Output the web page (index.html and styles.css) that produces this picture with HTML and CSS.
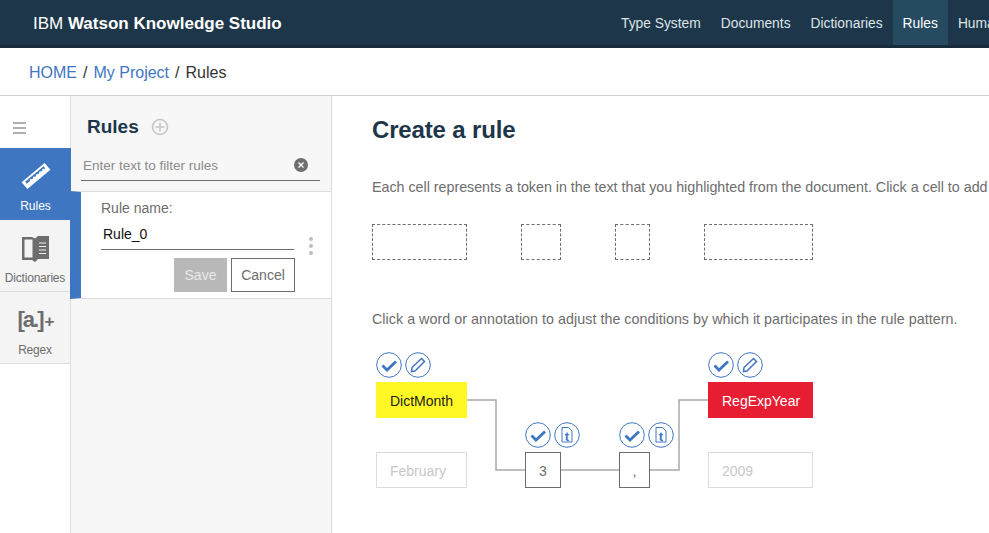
FILE: index.html
```html
<!DOCTYPE html>
<html lang="en">
<head>
    <meta charset="UTF-8">
    <title>IBM Watson Knowledge Studio</title>
    <link rel="stylesheet" href="styles.css">
</head>
<body>
    <header class="topbar">
        <div class="brand">IBM <b>Watson Knowledge Studio</b></div>
        <nav class="topnav">
            <a>Type System</a>
            <a>Documents</a>
            <a>Dictionaries</a>
            <a class="current">Rules</a>
            <a>Human</a>
        </nav>
    </header>
    <div class="crumbs">
        <a>HOME</a><span class="sep">/</span><a>My Project</a><span class="sep">/</span><span class="here">Rules</span>
    </div>
    <div class="workspace">
        <aside class="rail">
            <div class="burger"><i></i><i></i><i></i></div>
            <div class="rail-item active">
                <svg class="rail-icon icon-ruler" width="32" height="32" viewBox="0 0 32 32">
                    <g transform="rotate(-40 16 16)">
                        <rect x="1" y="11.500" width="30" height="9" fill="#fff"/>
                        <path d="M4 13.500h24v2.500h-1.500v-1h-2v1h-2v-1h-2v1h-2v-1h-2v1h-2v-1h-2v1h-2v-1h-2v1H4z" fill="#3f76c1"/>
                    </g>
                </svg>
                <span>Rules</span>
            </div>
            <div class="rail-item">
                <svg class="rail-icon icon-book" width="27" height="26" viewBox="0 0 27 26">
                    <path d="M0 1h10l3 1.500V26l-3-2H0zM2.500 3.500v18h8v-18z" fill="#6d6d6d"/>
                    <path d="M13 2.500 16 0h11v23H16l-3 3z" fill="#6d6d6d"/>
                    <path d="M17 7h7M17 10.500h7M17 14h7M17 17.500h7" stroke="#eee" stroke-width="1" fill="none"/>
                </svg>
                <span>Dictionaries</span>
            </div>
            <div class="rail-item">
                <div class="regex-mark">[a.]<em>+</em></div>
                <span>Regex</span>
            </div>
        </aside>
        <section class="rules-panel">
            <div class="panel-title">
                <h2>Rules</h2>
                <svg width="18" height="18" viewBox="0 0 18 18">
                    <circle cx="9" cy="9" r="7.500" fill="none" stroke="#c4c4c4" stroke-width="1.500"/>
                    <path d="M9 4.500v9M4.500 9h9" stroke="#c4c4c4" stroke-width="1.500"/>
                </svg>
            </div>
            <div class="filter">
                <span>Enter text to filter rules</span>
                <svg width="14" height="14" viewBox="0 0 14 14">
                    <circle cx="7" cy="7" r="7" fill="#6f6f6f"/>
                    <path d="M4.500 4.500l5 5M9.500 4.500l-5 5" stroke="#fff" stroke-width="1.400"/>
                </svg>
            </div>
            <div class="rule-card">
                <div class="rule-form">
                    <label>Rule name:</label>
                    <div class="rule-input">Rule_0</div>
                    <div class="rule-actions">
                        <button class="btn-save">Save</button>
                        <button class="btn-cancel">Cancel</button>
                    </div>
                </div>
                <div class="kebab"><i></i><i></i><i></i></div>
            </div>
        </section>
        <main class="content">
            <h1>Create a rule</h1>
            <p class="hint first">Each cell represents a token in the text that you highlighted from the document. Click a cell to add</p>
            <div class="cells">
                <div class="cell w95"></div>
                <div class="cell w40"></div>
                <div class="cell w35"></div>
                <div class="cell w109"></div>
            </div>
            <p class="hint second">Click a word or annotation to adjust the conditions by which it participates in the rule pattern.</p>
            <div class="pattern">
                <svg class="wires" width="450" height="150" viewBox="0 0 450 150">
                    <path d="M91 48h29v70h29M185 118h58M274 118h29V48h29" fill="none" stroke="#a9a9a9" stroke-width="1.500"/>
                </svg>
                <div class="token tok-month">
                    <div class="tools">
                        <svg class="tool" viewBox="0 0 26 26"><use href="#i-check"/></svg>
                        <svg class="tool" viewBox="0 0 26 26"><use href="#i-pencil"/></svg>
                    </div>
                    <div class="annot yellow">DictMonth</div>
                    <div class="word ghost">February</div>
                </div>
                <div class="token tok-three">
                    <div class="tools">
                        <svg class="tool" viewBox="0 0 26 26"><use href="#i-check"/></svg>
                        <svg class="tool" viewBox="0 0 26 26"><use href="#i-doc"/></svg>
                    </div>
                    <div class="word solid">3</div>
                </div>
                <div class="token tok-comma">
                    <div class="tools">
                        <svg class="tool" viewBox="0 0 26 26"><use href="#i-check"/></svg>
                        <svg class="tool" viewBox="0 0 26 26"><use href="#i-doc"/></svg>
                    </div>
                    <div class="word solid">,</div>
                </div>
                <div class="token tok-year">
                    <div class="tools">
                        <svg class="tool" viewBox="0 0 26 26"><use href="#i-check"/></svg>
                        <svg class="tool" viewBox="0 0 26 26"><use href="#i-pencil"/></svg>
                    </div>
                    <div class="annot red">RegExpYear</div>
                    <div class="word ghost">2009</div>
                </div>
            </div>
        </main>
    </div>

    <!-- shared icons -->
    <svg width="0" height="0" class="defs">
        <defs>
            <g id="i-check">
                <circle cx="13" cy="13" r="12.300" fill="#fff" stroke="#3f76c1" stroke-width="1"/>
                <path d="M6.500 13.500l4.500 4.500 9-8.500" fill="none" stroke="#3f76c1" stroke-width="2.800"/>
            </g>
            <g id="i-pencil">
                <circle cx="13" cy="13" r="12.300" fill="#fff" stroke="#3f76c1" stroke-width="1"/>
                <path d="M7 15.500 16.500 6.500l3 3L10 19l-3.500.5z" fill="none" stroke="#3f76c1" stroke-width="1.500"/>
            </g>
            <g id="i-doc">
                <circle cx="13" cy="13" r="12.300" fill="#fff" stroke="#3f76c1" stroke-width="1"/>
                <path d="M8 5.500h6.500L18 9v11H8z" fill="none" stroke="#3f76c1" stroke-width="1"/>
                <text x="13" y="18.500" class="doc-t">t</text>
            </g>
        </defs>
    </svg>
</body>
</html>
```

FILE: styles.css
```css
* {
    box-sizing: border-box;
}
html, body {
    height: 100%;
}
body {
    margin: 0;
    width: 989px;
    height: 533px;
    overflow: hidden;
    display: flex;
    flex-direction: column;
    font-family: "Liberation Sans", Arial, sans-serif;
    background-color: #fff;
    color: #6d6d6d;
}

/* top bar */
.topbar {
    height: 48px;
    flex: none;
    display: flex;
    justify-content: space-between;
    background-color: #1d3649;
    border-bottom: 3px solid #172c3b;
    color: #fff;
}
.brand {
    padding-left: 33px;
    font-size: 17px;
    line-height: 47px;
    font-weight: 400;
    white-space: nowrap;
}
.brand b {
    font-weight: 700;
}
.topnav {
    display: flex;
    width: 378px;
    flex: none;
    overflow: hidden;
    font-size: 13.800px;
    line-height: 47px;
    white-space: nowrap;
}
.topnav a {
    padding: 0 10px;
    color: #dfe4e8;
}
.topnav a.current {
    background-color: #264a60;
    color: #fff;
}

/* breadcrumb */
.crumbs {
    height: 48px;
    flex: none;
    padding-left: 29px;
    font-size: 16px;
    line-height: 49px;
    border-bottom: 1px solid #cfcfcf;
    color: #3f76c1;
}
.sep {
    margin: 0 6px;
    color: #333;
}
.here {
    color: #333;
}

.workspace {
    flex: 1;
    display: flex;
    min-height: 0;
}

/* left rail */
.rail {
    width: 71px;
    flex: none;
    border-right: 1px solid #dcdcdc;
}
.burger {
    height: 52px;
    padding: 26px 0 0 13px;
}
.burger i {
    display: block;
    width: 13px;
    height: 2px;
    margin-bottom: 3px;
    background-color: #b0b0b0;
}
.rail-item {
    height: 72px;
    display: flex;
    flex-direction: column;
    align-items: center;
    background-color: #f4f4f4;
    border-bottom: 1px solid #dcdcdc;
    font-size: 12px;
    color: #6d6d6d;
}
.rail-item.active {
    background-color: #3f76c1;
    color: #fff;
    border-bottom: 0;
    width: 71px;
}
.rail-item span {
    margin-top: auto;
    padding-bottom: 6px;
    letter-spacing: -0.2px;
}
.rail-item.active span {
    padding-bottom: 7px;
    letter-spacing: 0;
}
.rail-icon {
    flex: none;
}
.icon-ruler {
    margin-top: 12px;
}
.icon-book {
    margin-top: 16px;
}
.regex-mark {
    margin-top: 14px;
    font-size: 22px;
    line-height: 28px;
    font-weight: 700;
    letter-spacing: -2px;
    color: #6d6d6d;
}
.regex-mark em {
    font-style: normal;
    font-size: 17px;
    margin-left: 2px;
}

/* rules panel */
.rules-panel {
    width: 261px;
    flex: none;
    background-color: #f7f7f7;
    border-right: 1px solid #dcdcdc;
}
.panel-title {
    display: flex;
    align-items: center;
    gap: 12px;
    padding: 10px 0 0 16px;
    height: 52px;
}
.panel-title h2 {
    margin: 0;
    font-size: 19px;
    font-weight: 700;
    color: #1d3649;
}
.filter {
    display: flex;
    justify-content: space-between;
    align-items: center;
    width: 239px;
    height: 33px;
    margin-left: 10px;
    padding: 2px 12px 0 2px;
    border-bottom: 1px solid #6d6d6d;
    font-size: 13.500px;
    color: #8c8c8c;
}
.rule-card {
    display: flex;
    height: 108px;
    margin-top: 10px;
    margin-left: -1px;
    background-color: #fff;
    border-top: 1px solid #dcdcdc;
    border-bottom: 1px solid #dcdcdc;
    border-left: 11px solid #3f76c1;
}
.rule-form {
    width: 213px;
    padding-left: 20px;
}
.rule-form label {
    display: block;
    font-size: 14px;
    line-height: 16px;
    margin-top: 8px;
}
.rule-input {
    height: 34px;
    padding: 10px 0 0 2px;
    border-bottom: 1px solid #6d6d6d;
    font-size: 14px;
    color: #111;
}
.rule-actions {
    display: flex;
    justify-content: flex-end;
    gap: 4px;
    margin-top: 8px;
    margin-right: -1px;
}
.rule-actions button {
    height: 34px;
    font-family: inherit;
    font-size: 14px;
    padding: 0;
}
.btn-save {
    width: 53px;
    border: 0;
    background-color: #b8b8b8;
    color: #e8e8e8;
}
.btn-cancel {
    width: 64px;
    border: 1px solid #6d6d6d;
    background-color: #fff;
    color: #6d6d6d;
}
.kebab {
    padding: 45px 0 0 15px;
}
.kebab i {
    display: block;
    width: 4px;
    height: 4px;
    margin-bottom: 3px;
    border-radius: 50%;
    background-color: #bdbdbd;
}

/* main area */
.content {
    flex: 1;
    min-width: 0;
    overflow: hidden;
    padding-left: 40px;
}
.content h1 {
    margin: 20px 0 0;
    font-size: 24px;
    line-height: 28px;
    font-weight: 700;
    letter-spacing: -0.150px;
    color: #1d3649;
}
.hint {
    margin: 0;
    font-size: 14.300px;
    line-height: 16px;
    white-space: nowrap;
    color: #6d6d6d;
}
.hint.first {
    margin-top: 35px;
    letter-spacing: -0.020px;
}
.hint.second {
    margin-top: 51px;
    letter-spacing: 0.030px;
}
.cells {
    display: flex;
    margin-top: 29px;
}
.cell {
    height: 36px;
    border: 1px dashed #6d6d6d;
}
.w95 { width: 95px; }
.w40 { width: 40px; margin-left: 54px; }
.w35 { width: 35px; margin-left: 54px; }
.w109 { width: 109px; margin-left: 54px; }

/* pattern diagram */
.pattern {
    position: relative;
    height: 160px;
    margin-top: 25px;
}
.wires {
    position: absolute;
    left: 4px;
    top: 0;
}
.token {
    position: absolute;
}
.tok-month { left: 4px; top: 0; width: 91px; }
.tok-three { left: 153px; top: 70px; width: 36px; }
.tok-comma { left: 247px; top: 70px; width: 31px; }
.tok-year { left: 336px; top: 0; width: 105px; }
.tools {
    display: flex;
    gap: 3px;
    height: 30px;
    padding-bottom: 4px;
}
.tool {
    width: 26px;
    height: 26px;
    flex: none;
}
.doc-t {
    font-size: 13px;
    font-weight: 700;
    text-anchor: middle;
    fill: #3f76c1;
}
.annot {
    height: 36px;
    padding-left: 14px;
    font-size: 14px;
    line-height: 38px;
}
.annot.yellow {
    background-color: #fff824;
    color: #222;
}
.annot.red {
    background-color: #e71d32;
    color: #fff;
}
.word {
    height: 36px;
    background-color: #fff;
    font-size: 14px;
    line-height: 37px;
}
.word.ghost {
    margin-top: 34px;
    padding-left: 13px;
    border: 1px solid #dcdcdc;
    color: #c8c8c8;
}
.word.solid {
    border: 1px solid #6d6d6d;
    text-align: center;
    color: #6d6d6d;
}
.defs {
    position: absolute;
}
```
